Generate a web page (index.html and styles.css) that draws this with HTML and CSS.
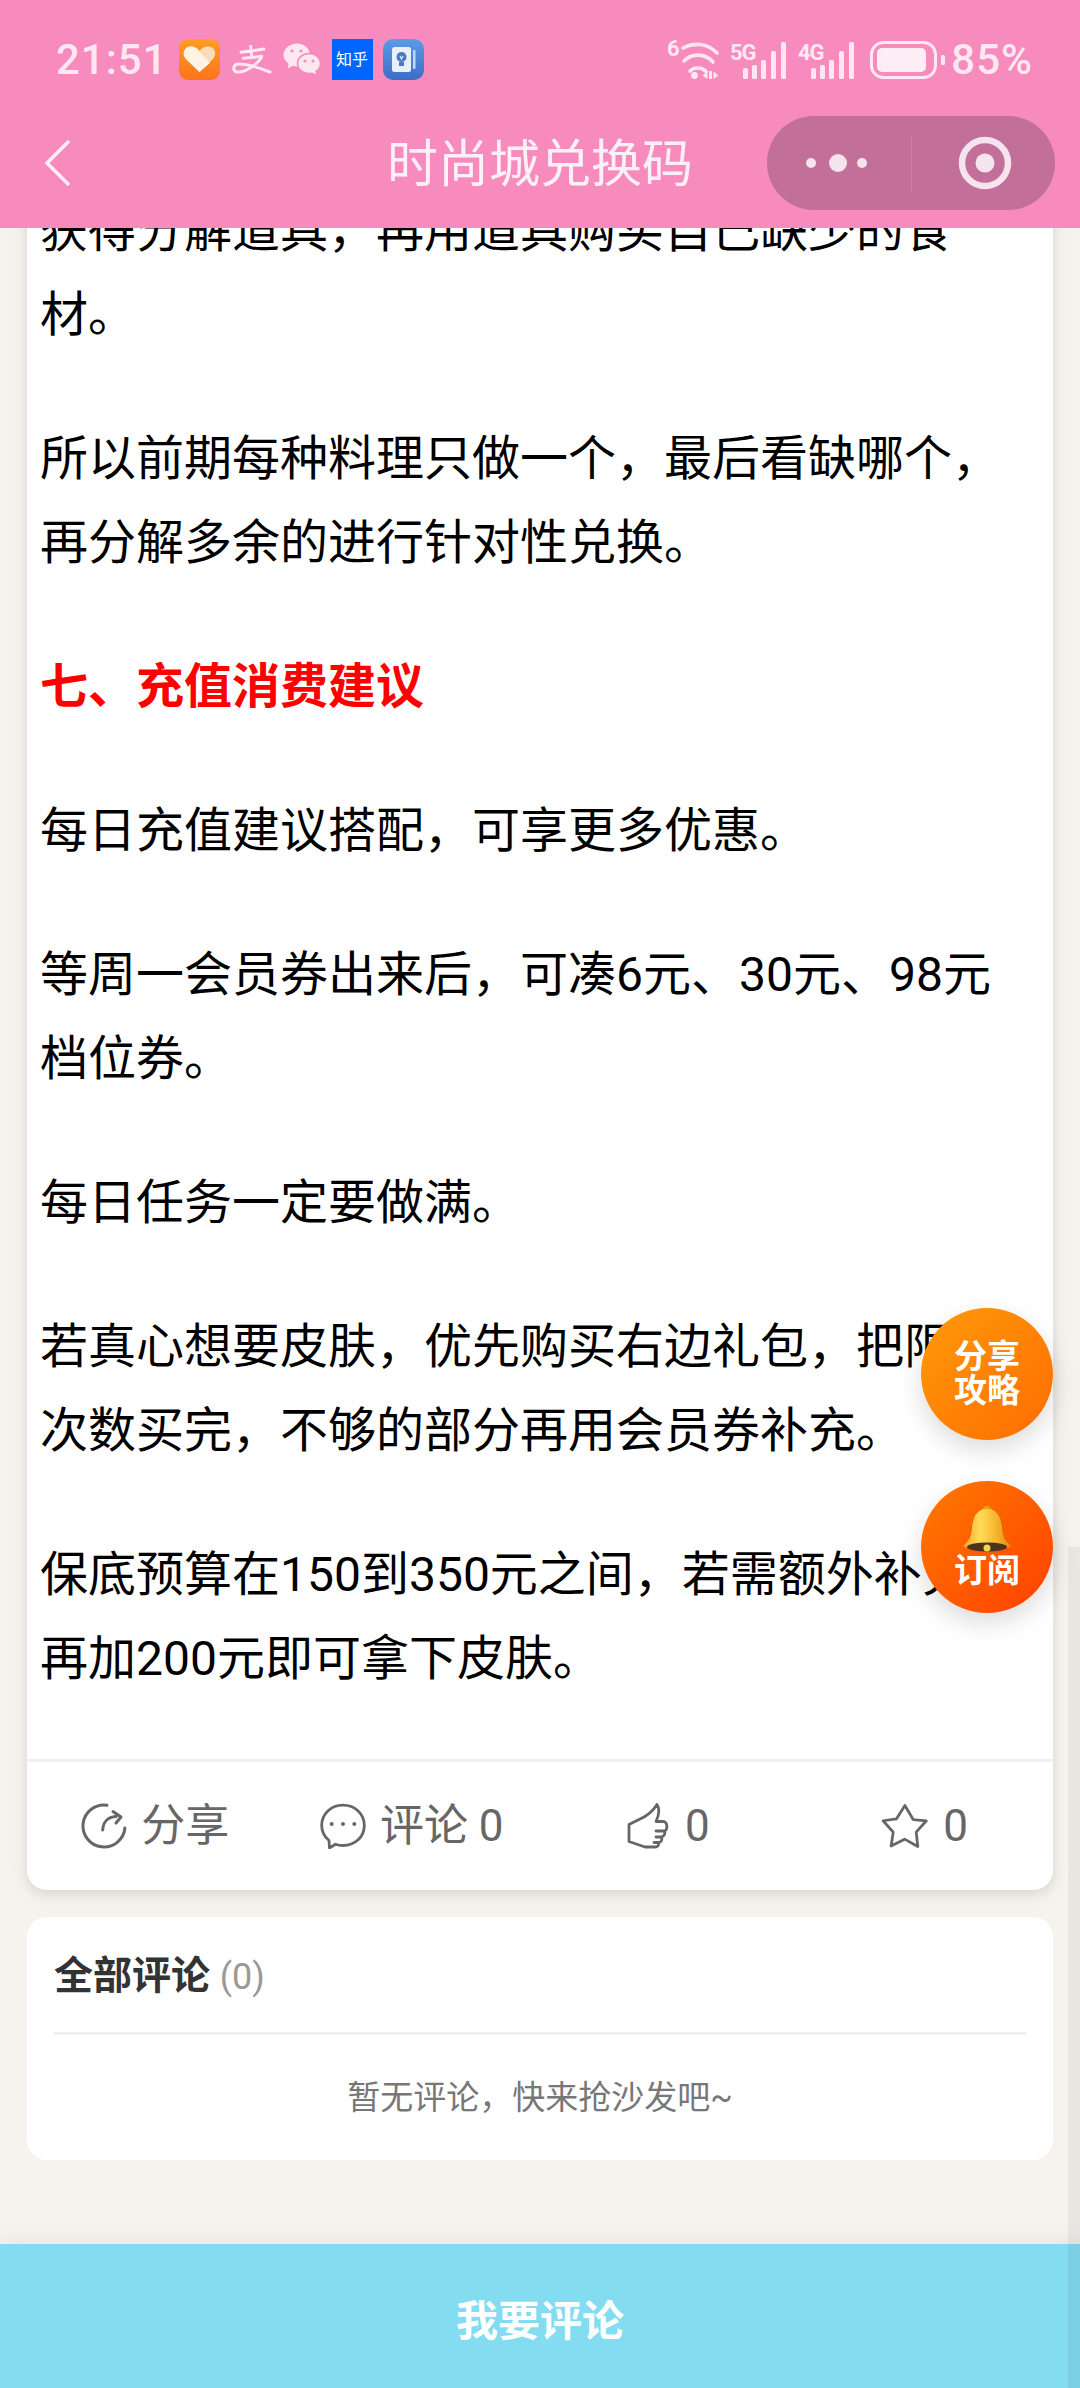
FILE: index.html
```html
<!DOCTYPE html>
<html lang="zh-CN">
<head>
<meta charset="utf-8">
<title>时尚城兑换码</title>
<link rel="stylesheet" href="styles.css">
</head>
<body>
<div class="page">
  <header class="top">
    <div class="status">
      <div class="status-left">
        <span class="time">21:51</span>
        <svg class="app" viewBox="0 0 41 41"><defs><linearGradient id="hg" x1="0" y1="0" x2="0" y2="1"><stop offset="0" stop-color="#ff9d22"/><stop offset="1" stop-color="#fb741c"/></linearGradient></defs><rect width="41" height="41" rx="9" fill="url(#hg)"/><path d="M20.500 33 L7 20 C2.500 15 5 7.500 12 7.500 C15.500 7.500 18.500 9 20.500 12 C22.500 9 25.500 7.500 29 7.500 C36 7.500 38.500 15 34 20 Z" fill="#fbdcb8"/><path d="M20.500 33 L7 20 C2.500 15 5 7.500 12 7.500 C14 7.500 16 8 17.500 9.500 L31 24 Z" fill="#fff3e6"/></svg>
        <svg class="alipay" viewBox="0 0 40 30" fill="none" stroke="#fde8f2" stroke-width="3" stroke-linecap="round"><path d="M9 7.300 L32 4 M18.700 1 L19.700 12 M11.300 13.300 L29.700 11.300 M29.500 12.500 C24 21 12 28 5 27 C0 26 1 19 7 19 C15 19 28 23 38 27"/></svg>
        <svg class="wechat" viewBox="0 0 38 33"><path d="M15 0.500 C22 0.500 28 5.500 28 12 C28 18.500 22 23.500 15 23.500 C13.500 23.500 12 23.300 10.500 22.800 L6 25.500 L6.500 20.500 C3.500 18.500 1.500 15.500 1.500 12 C1.500 5.500 8 0.500 15 0.500 Z" fill="#fde8f2"/><path d="M27 10.500 C33.500 10.500 38.500 15 38.500 20.500 C38.500 23.800 36.800 26.500 34 28.300 L35 33 L30 30.200 C29 30.400 28 30.500 27 30.500 C20.500 30.500 15.500 26 15.500 20.500 C15.500 15 20.500 10.500 27 10.500 Z" fill="#fde8f2" stroke="#f78bbd" stroke-width="1.500"/><circle cx="10" cy="8" r="1.600" fill="#f78bbd"/><circle cx="19" cy="8" r="1.600" fill="#f78bbd"/><circle cx="23" cy="18" r="1.500" fill="#f78bbd"/><circle cx="31" cy="18" r="1.500" fill="#f78bbd"/></svg>
        <span class="zhihu">知乎</span>
        <svg class="app" viewBox="0 0 41 41"><defs><linearGradient id="ng" x1="0" y1="0" x2="0" y2="1"><stop offset="0" stop-color="#5a9be6"/><stop offset="1" stop-color="#3c6ec8"/></linearGradient></defs><rect width="41" height="41" rx="10" fill="url(#ng)"/><rect x="9" y="8" width="19" height="25" rx="2.500" fill="#e8eff9"/><rect x="30" y="11" width="2.500" height="19" rx="1" fill="#c5d8f2"/><circle cx="18.500" cy="18" r="5" fill="#4a78c8"/><rect x="16" y="23" width="5" height="4" fill="#4a78c8"/><path d="M17 17 L18.500 20 L20 17" fill="none" stroke="#e8eff9" stroke-width="1.200"/></svg>
      </div>
      <div class="status-right">
        <svg class="wifi" viewBox="0 -6 56 48" fill="none" stroke="#fde8f2" stroke-width="3.600" stroke-linecap="round"><text class="tiny" x="4" y="17" fill="#fde8f2" stroke="none">6</text><path d="M20 9 C30 3.500 44 3.500 54 14"/><path d="M21 22 C29 14 42 14 50 23"/><path d="M27 32 C31 28 39 28 43 32.500"/><circle cx="31.500" cy="36.500" r="3.400" fill="#fde8f2" stroke="none"/><path d="M44.500 32.500 L39.500 36.500 L44.500 40 Z M50.500 32.500 L55.500 36.500 L50.500 40 Z" fill="#fde8f2" stroke="none"/><rect x="46" y="32" width="3" height="8" fill="#fde8f2" stroke="none"/></svg>
        <svg class="signal" viewBox="0 0 56 42" fill="#fde8f2"><text class="tiny" x="0" y="21">5G</text><rect x="13" y="29" width="5" height="11" rx="1.500"/><rect x="22" y="26" width="5" height="14" rx="1.500"/><rect x="31" y="21" width="5" height="19" rx="1.500"/><rect x="41" y="12" width="5" height="28" rx="1.500"/><rect x="51" y="3" width="5" height="37" rx="1.500"/></svg>
        <svg class="signal" viewBox="0 0 56 42" fill="#fde8f2"><text class="tiny" x="0" y="21">4G</text><rect x="13" y="29" width="5" height="11" rx="1.500"/><rect x="22" y="26" width="5" height="14" rx="1.500"/><rect x="31" y="21" width="5" height="19" rx="1.500"/><rect x="41" y="12" width="5" height="28" rx="1.500"/><rect x="51" y="3" width="5" height="37" rx="1.500"/></svg>
        <svg class="battery" viewBox="0 0 76 38"><rect x="1.500" y="1.500" width="64" height="35" rx="12" fill="none" stroke="#fde8f2" stroke-width="3"/><rect x="7" y="7" width="49" height="24" rx="5" fill="#fdeef5"/><rect x="71" y="14" width="4" height="10" rx="1.500" fill="#fde8f2"/></svg>
        <span class="pct">85%</span>
      </div>
    </div>
    <nav class="nav">
      <div class="nav-left">
        <svg class="back" viewBox="0 0 27 46" fill="none" stroke="#fdeff6" stroke-width="3.500"><path d="M25 1 L3 23 L25 45"/></svg>
      </div>
      <h1 class="title">时尚城兑换码</h1>
      <div class="nav-right">
        <div class="capsule">
          <svg class="more" viewBox="0 0 66 20" fill="#f5e3ed"><circle cx="6" cy="10" r="5"/><circle cx="33" cy="10" r="9"/><circle cx="57" cy="10" r="5"/></svg>
          <span class="sep"></span>
          <svg class="target" viewBox="0 0 54 54" fill="none"><circle cx="27" cy="27" r="23" stroke="#f5e3ed" stroke-width="6.500"/><circle cx="27" cy="27" r="9.500" fill="#f5e3ed"/></svg>
        </div>
      </div>
    </nav>
  </header>

  <main class="main">
    <article class="card">
      <div class="article">
        <p>获得分解道具，再用道具购买自己缺少的食材。</p>
        <p>所以前期每种料理只做一个，最后看缺哪个，再分解多余的进行针对性兑换。</p>
        <p class="heading">七、充值消费建议</p>
        <p>每日充值建议搭配，可享更多优惠。</p>
        <p>等周一会员券出来后，可凑6元、30元、98元档位券。</p>
        <p>每日任务一定要做满。</p>
        <p>若真心想要皮肤，优先购买右边礼包，把限购次数买完，不够的部分再用会员券补充。</p>
        <p>保底预算在150到350元之间，若需额外补充，再加200元即可拿下皮肤。</p>
      </div>
      <div class="actions">
        <div class="action">
          <svg class="ico" viewBox="0 0 46 46" fill="none" stroke="#666" stroke-width="3" stroke-linecap="round" stroke-linejoin="round"><path d="M26 2.200 A21 21 0 1 0 43.900 25"/><path d="M21.700 27 C22 19 27 14 35 13.500"/><path d="M32 8.500 L40 14 L35 20"/></svg>
          <span>分享</span>
        </div>
        <div class="action">
          <svg class="ico" viewBox="0 0 46 46" fill="none" stroke="#666" stroke-width="2.800" stroke-linejoin="round"><path d="M9 37.500 C4.500 33.800 1.700 28.500 1.700 22.500 C1.700 11 11 2.200 23 2.200 C35 2.200 44.300 11 44.300 22.500 C44.300 34 35 42.500 23 42.500 C20 42.500 17.500 42 15.500 41.200 L9.500 45 Z"/><circle cx="11.700" cy="21" r="2" fill="#666" stroke="none"/><circle cx="23" cy="21" r="2" fill="#666" stroke="none"/><circle cx="34.300" cy="21" r="2" fill="#666" stroke="none"/></svg>
          <span>评论 0</span>
        </div>
        <div class="action">
          <svg class="ico" viewBox="0 0 44 46" fill="none" stroke="#666" stroke-width="2.800" stroke-linecap="round" stroke-linejoin="round"><path d="M30 1.500 C26 8 20 13 13 16 L2 21.500 V38.500 L18 44 H28 C31 44 32 42 31.500 39.500 C34 39.500 35.500 37 34.500 34 C37 33.500 38.500 31 37.500 28 C40.500 27 41 20 37 18.500 H29 C32 12 33 6 30 1.500 Z"/><path d="M29 28 H37 M29 34 H34 M27 39.500 H31"/></svg>
          <span>0</span>
        </div>
        <div class="action">
          <svg class="ico" viewBox="0 0 52 50" fill="none" stroke="#666" stroke-width="3" stroke-linejoin="round"><path d="M26 2.700 L35 18 L49.300 19.300 L38.300 31.700 L40 47.300 L25.700 39.300 L11 46.700 L13.300 31.700 L2.300 19.300 L16.700 17.300 Z"/></svg>
          <span>0</span>
        </div>
      </div>
    </article>

    <section class="comments">
      <h2 class="comments-title">全部评论 <span class="count">(0)</span></h2>
      <div class="empty">暂无评论，快来抢沙发吧~</div>
    </section>
  </main>

  <button class="submit">我要评论</button>

  <div class="fab fab-share"><span>分享</span><span>攻略</span></div>
  <div class="fab fab-sub">
    <svg class="bell" viewBox="0 0 50 48"><defs><linearGradient id="bg" x1="0" y1="0" x2="1" y2="0"><stop offset="0" stop-color="#f5a623"/><stop offset="0.350" stop-color="#ffdc5a"/><stop offset="0.700" stop-color="#f7b52c"/><stop offset="1" stop-color="#d98a12"/></linearGradient></defs><circle cx="25" cy="5" r="5" fill="#e8a020"/><path d="M25 3 C36 3 39 12 40 22 C40.500 30 43 35 49 40 C40 46 10 46 1 40 C7 35 9.500 30 10 22 C11 12 14 3 25 3 Z" fill="url(#bg)"/><ellipse cx="25" cy="41" rx="20" ry="4.500" fill="#4a3320"/><circle cx="25" cy="42" r="3.500" fill="#f7d24a"/></svg>
    <span>订阅</span>
  </div>
  <div class="scroll-track"></div>
</div>
</body>
</html>
```

FILE: styles.css
```css
* { box-sizing: border-box; }

html, body {
  margin: 0;
  padding: 0;
}

body {
  font-family: Roboto, "Noto Sans CJK SC", sans-serif;
  color: #000;
}

.page {
  position: relative;
  width: 1080px;
  height: 2388px;
  overflow: hidden;
  display: flex;
  flex-direction: column;
  background: #f6f3ef;
}

/* Header overlays the scrolled content */
.top {
  position: absolute;
  top: 0;
  left: 0;
  right: 0;
  height: 228px;
  z-index: 3;
  padding-top: 39px;
  background: #f78bbd;
}

.status {
  display: flex;
  justify-content: space-between;
  align-items: center;
  height: 41px;
  padding: 0 47px 0 56px;
}

.status-left,
.status-right {
  display: flex;
  align-items: center;
}

.time,
.pct {
  font-size: 42px;
  font-weight: 500;
  line-height: 41px;
  letter-spacing: 1px;
  color: #fde8f2;
}

.app {
  width: 41px;
  height: 41px;
  flex: none;
}

.time + .app { margin-left: 11px; }

.alipay {
  width: 40px;
  height: 30px;
  margin: 0 10px 0 12px;
}

.wechat {
  width: 38px;
  height: 33px;
  margin-right: 12px;
}

.zhihu {
  width: 41px;
  height: 41px;
  margin-right: 10px;
  background: #0066ff;
  color: #fff;
  font-size: 16px;
  line-height: 41px;
  text-align: center;
  white-space: nowrap;
}

.tiny {
  font-family: Roboto, sans-serif;
  font-size: 22px;
  font-weight: 700;
  letter-spacing: -1px;
}

.wifi {
  width: 56px;
  height: 48px;
  margin-right: 11px;
  margin-bottom: 6px;
}

.signal {
  width: 56px;
  height: 42px;
  margin-right: 12px;
}

.signal + .battery { margin-left: 4px; }

.battery {
  width: 76px;
  height: 38px;
  margin-right: 5px;
}

.nav {
  display: grid;
  grid-template-columns: 1fr auto 1fr;
  align-items: center;
  height: 94px;
  margin-top: 36px;
}

.nav-left {
  padding-left: 44px;
  display: flex;
  align-items: center;
}

.back {
  width: 27px;
  height: 46px;
}

.title {
  margin: 0;
  padding-top: 3px;
  font-size: 51px;
  font-weight: 400;
  line-height: 91px;
  color: #fdf0f6;
}

.nav-right {
  display: flex;
  justify-content: flex-end;
  padding-right: 25px;
}

.capsule {
  display: flex;
  align-items: center;
  width: 288px;
  height: 94px;
  border-radius: 47px;
  background: #c26f99;
}

.more {
  width: 66px;
  height: 20px;
  margin-left: 38px;
}

.sep {
  width: 1px;
  height: 56px;
  margin-left: 40px;
  background: #cf7fa6;
}

.target {
  width: 54px;
  height: 54px;
  margin-left: 46px;
}

/* Scrolled content */
.main {
  padding: 170px 27px 0;
}

.card {
  background: #fff;
  border-radius: 20px;
  box-shadow: 0 4px 14px rgba(110, 90, 70, 0.22);
}

.article {
  padding: 19px 28px 58px 13px;
  font-size: 48px;
  line-height: 84px;
}

.article p {
  margin: 0 0 60px;
}

.article p:last-child {
  margin-bottom: 0;
}

.article .heading {
  color: #f00;
  font-weight: 700;
}

.actions {
  display: flex;
  height: 131px;
  border-top: 3px solid #f0f0f0;
}

.action {
  flex: 1;
  display: flex;
  justify-content: center;
  align-items: center;
  gap: 14px;
  font-size: 44px;
  line-height: 46px;
  color: #666;
}

.ico {
  height: 46px;
  width: auto;
  flex: none;
}

.comments {
  margin-top: 27px;
  height: 243px;
  padding: 28px 27px 0 27px;
  background: #fff;
  border-radius: 20px;
}

.comments-title {
  margin: 0;
  height: 90px;
  padding-top: 3px;
  border-bottom: 3px solid #f0f0f0;
  font-size: 39px;
  font-weight: 700;
  line-height: 56px;
  color: #333;
}

.count {
  font-size: 36px;
  font-weight: 400;
  color: #999;
}

.empty {
  height: 125px;
  line-height: 125px;
  text-align: center;
  font-size: 33px;
  color: #777;
}

.submit {
  display: block;
  width: 100%;
  height: 144px;
  margin-top: auto;
  padding: 3px 0 0;
  border: 0;
  background: #84dcf1;
  box-shadow: 0 -4px 18px rgba(120, 100, 80, 0.1);
  color: #fff;
  font-family: inherit;
  font-size: 42px;
  font-weight: 700;
  position: relative;
  z-index: 1;
}

/* Floating buttons */
.fab {
  position: absolute;
  left: 921px;
  z-index: 2;
  width: 132px;
  height: 132px;
  border-radius: 50%;
  display: flex;
  flex-direction: column;
  align-items: center;
  justify-content: center;
  color: #fff;
  font-size: 33px;
  font-weight: 700;
  line-height: 34px;
  box-shadow: 0 10px 26px rgba(0, 0, 0, 0.14);
}

.fab-share {
  top: 1308px;
  background: linear-gradient(135deg, #ff9a0a, #ff6c00);
}

.fab-sub {
  top: 1481px;
  justify-content: flex-start;
  padding-top: 25px;
  background: linear-gradient(135deg, #ff7a00, #ff4000);
}

.bell {
  width: 52px;
  height: 48px;
  flex: none;
}

.scroll-track {
  position: absolute;
  top: 1547px;
  right: 0;
  bottom: 0;
  width: 12px;
  z-index: 2;
  background: rgba(0, 0, 0, 0.05);
}
```
